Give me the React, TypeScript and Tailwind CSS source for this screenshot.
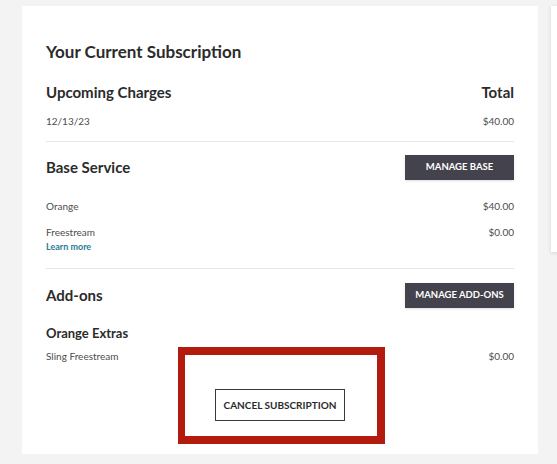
const font = "font-['Lato','Liberation_Sans',sans-serif]";

function Row({ label, amount }: { label: string; amount: string }) {
  return (
    <div className="flex items-center justify-between text-[10px] leading-[14px] text-[#4d4d4d]">
      <span>{label}</span>
      <span>{amount}</span>
    </div>
  );
}

function SectionHead({ title, action }: { title: string; action: string }) {
  return (
    <div className="flex items-center justify-between">
      <h3 className="text-[15px] font-bold text-[#2b2b2b]">{title}</h3>
      <button
        type="button"
        className="h-[25px] w-[109px] bg-[#44424c] text-[9.5px] font-bold text-white shadow-sm"
      >
        {action}
      </button>
    </div>
  );
}

export default function App() {
  return (
    <div className={`${font} flex min-h-[464px] items-start overflow-hidden bg-[#f3f3f4] pt-[6px]`}>
      <div className="relative ml-[22px] h-[448px] w-[516px] shrink-0 bg-white px-[24px] pt-[34px]">
        <h2 className="text-[17px] font-bold leading-[24px] text-[#2b2b2b]">Your Current Subscription</h2>

        <div className="mt-[18px] flex items-center justify-between text-[15px] font-bold leading-[20px] text-[#2b2b2b]">
          <span>Upcoming Charges</span>
          <span>Total</span>
        </div>
        <div className="mt-[12px]">
          <Row label="12/13/23" amount="$40.00" />
        </div>

        <div className="mt-[13px] h-px bg-[#e6e6e6]" />

        <div className="mt-[13px]">
          <SectionHead title="Base Service" action="MANAGE BASE" />
        </div>
        <div className="mt-[19px]">
          <Row label="Orange" amount="$40.00" />
        </div>
        <div className="mt-[12px]">
          <Row label="Freestream" amount="$0.00" />
        </div>
        <a className="mt-[2px] block text-[9px] font-bold leading-[12px] text-[#2c7a98]">Learn more</a>

        <div className="mt-[15px] h-px bg-[#e6e6e6]" />

        <div className="mt-[14px]">
          <SectionHead title="Add-ons" action="MANAGE ADD-ONS" />
        </div>
        <h4 className="mt-[16px] text-[13px] font-bold leading-[18px] text-[#2b2b2b]">Orange Extras</h4>
        <div className="mt-[7px]">
          <Row label="Sling Freestream" amount="$0.00" />
        </div>

        <div className="mt-[26px] flex justify-center">
          <button
            type="button"
            className="h-[32px] w-[130px] border-[1.5px] border-[#3a3a3a] bg-white text-[10px] font-bold text-[#2b2b2b]"
          >
            CANCEL SUBSCRIPTION
          </button>
        </div>

        <div className="absolute left-[156px] top-[341px] h-[97px] w-[207px] border-[8px] border-l-[7px] border-[#b31b0e]" />
      </div>

      <div className="ml-[13px] h-[246px] w-[20px] shrink-0 bg-white shadow-[0_1px_4px_rgba(0,0,0,0.12)]" />
    </div>
  );
}
